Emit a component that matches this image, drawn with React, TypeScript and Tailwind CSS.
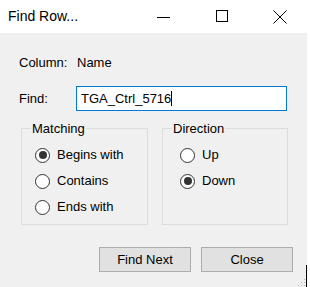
import { type ReactNode } from "react";

function Radio({ checked, label }: { checked?: boolean; label: string }) {
  return (
    <div className="h-[26px] flex items-center">
      <span className="w-[15px] h-[15px] rounded-full border border-[#333333] bg-white flex items-center justify-center shrink-0">
        {checked && <span className="w-[8px] h-[8px] rounded-full bg-[#333333]" />}
      </span>
      <span className="ml-[7px]">{label}</span>
    </div>
  );
}

function GroupBox({ title, className, children }: { title: string; className?: string; children: ReactNode }) {
  return (
    <fieldset className={"border border-[#dcdcdc] pt-[6px] pb-[4px] " + (className ?? "")}>
      <legend className="ml-[9px] px-[1px] leading-[15px]">{title}</legend>
      {children}
    </fieldset>
  );
}

export default function App() {
  return (
    <div
      className="relative w-[310px] h-[287px] bg-white flex flex-col text-[13px] text-black overflow-hidden"
      style={{ fontFamily: '"Liberation Sans", Arial, sans-serif' }}
    >
      {/* Title bar */}
      <div className="h-[33px] flex items-center shrink-0">
        <span className="ml-[8px] text-[14px]">Find Row...</span>
        <div className="ml-auto flex items-center h-full">
          <svg width="14" height="14" viewBox="0 0 14 14" className="mr-[45px]">
            <path d="M0 7.5H13" stroke="#000" strokeWidth="1" />
          </svg>
          <svg width="13" height="13" viewBox="0 0 13 13" className="mr-[44px]">
            <rect x="0.5" y="0.5" width="11" height="11" fill="none" stroke="#000" strokeWidth="1" />
          </svg>
          <svg width="14" height="14" viewBox="0 0 14 14" className="mr-[23px]">
            <path d="M0.5 0.5L13.5 13.5M13.5 0.5L0.5 13.5" stroke="#000" strokeWidth="1" />
          </svg>
        </div>
      </div>

      {/* Body */}
      <div className="flex-1 w-[307px] bg-[#f0f0f0] flex flex-col">
        <div className="mt-[22px] ml-[19px] flex items-center h-[15px]">
          <span className="w-[58px]">Column:</span>
          <span>Name</span>
        </div>

        <div className="mt-[16px] ml-[19px] flex items-center">
          <span className="w-[57px]">Find:</span>
          <div className="w-[211px] h-[25px] border border-[#0078d7] bg-white flex items-center pl-[4px]">
            <span>TGA_Ctrl_5716</span>
            <span className="inline-block w-[1px] h-[15px] bg-black" />
          </div>
        </div>

        <div className="mt-[10px] ml-[21px] flex gap-[14px]">
          <GroupBox title="Matching" className="w-[127px]">
            <div className="pl-[13px]">
              <Radio checked label="Begins with" />
              <Radio label="Contains" />
              <Radio label="Ends with" />
            </div>
          </GroupBox>
          <GroupBox title="Direction" className="w-[126px]">
            <div className="pl-[17px]">
              <Radio label="Up" />
              <Radio checked label="Down" />
            </div>
          </GroupBox>
        </div>

        <div className="mt-[22px] ml-[99px] flex gap-[10px]">
          <button className="w-[92px] h-[25px] bg-[#e1e1e1] border border-[#adadad]">Find Next</button>
          <button className="w-[92px] h-[25px] bg-[#e1e1e1] border border-[#adadad]">Close</button>
        </div>
      </div>

      {/* Resize grip and cut-off edge */}
      <svg width="10" height="10" viewBox="0 0 10 10" className="absolute left-[296px] top-[277px]">
        <rect x="8" y="2" width="1" height="1" fill="#b8b8b8" />
        <rect x="5" y="5" width="1" height="1" fill="#b8b8b8" />
        <rect x="8" y="5" width="1" height="1" fill="#b8b8b8" />
        <rect x="2" y="8" width="1" height="1" fill="#b8b8b8" />
        <rect x="5" y="8" width="1" height="1" fill="#b8b8b8" />
        <rect x="8" y="8" width="1" height="1" fill="#b8b8b8" />
      </svg>
      <div className="absolute left-[306px] top-[265px] w-[1px] h-[22px] bg-black" />
    </div>
  );
}
